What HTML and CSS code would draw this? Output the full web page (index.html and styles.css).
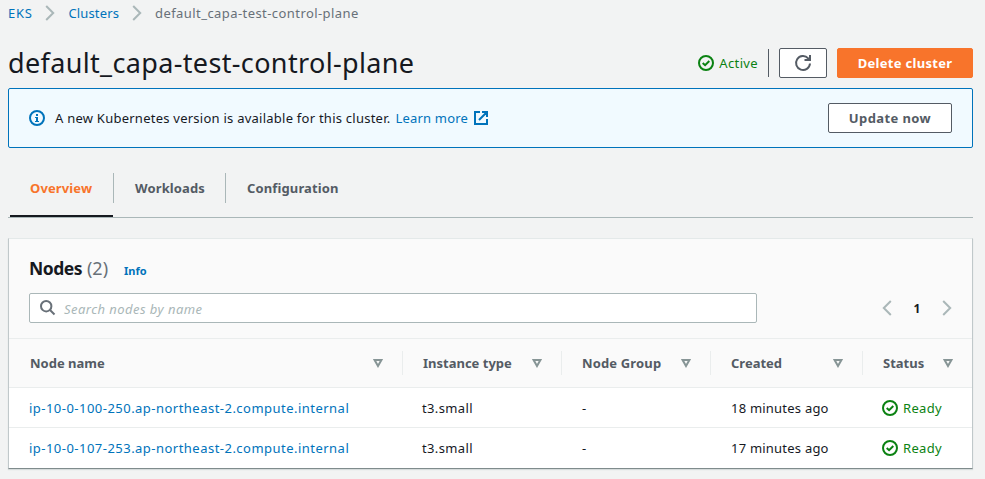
FILE: index.html
```html
<!DOCTYPE html>
<html lang="en">
<head>
<meta charset="utf-8">
<title>default_capa-test-control-plane</title>
<link rel="stylesheet" href="styles.css">
</head>
<body>
<svg class="defs" width="0" height="0" aria-hidden="true">
  <symbol id="check" viewBox="0 0 16 16"><circle cx="8" cy="8" r="7" fill="none" stroke="currentColor" stroke-width="2"/><path d="M4.7 8l2.4 2.2L11.3 6" fill="none" stroke="currentColor" stroke-width="2"/></symbol>
  <symbol id="next" viewBox="0 0 10 16"><path d="M1.2 1l7 7-7 7" fill="none" stroke="currentColor" stroke-width="2"/></symbol>
  <symbol id="prev" viewBox="0 0 10 16"><path d="M8.8 1l-7 7 7 7" fill="none" stroke="currentColor" stroke-width="2"/></symbol>
  <symbol id="sort" viewBox="0 0 10 9"><path d="M1.6 1h6.8L5 7z" fill="none" stroke="currentColor" stroke-width="2"/></symbol>
</svg>
<nav class="crumbs">
  <a class="eks">EKS</a><svg width="10" height="16"><use href="#next"/></svg>
  <a class="clusters">Clusters</a><svg width="10" height="16"><use href="#next"/></svg>
  <span class="current">default_capa-test-control-plane</span>
</nav>
<header class="title-bar">
  <h1>default_capa-test-control-plane</h1>
  <div class="actions">
    <span class="status"><svg width="16" height="16"><use href="#check"/></svg><span>Active</span></span>
    <i class="rule"></i>
    <button class="btn refresh" aria-label="Refresh"><svg width="18" height="18" viewBox="0 0 18 18"><path d="M16 9.5A7 7 0 1 1 14.2 4.3L15.7 6" fill="none" stroke="currentColor" stroke-width="2"/><path d="M10.5 6H16V1" fill="none" stroke="currentColor" stroke-width="2"/></svg></button>
    <button class="btn primary">Delete cluster</button>
  </div>
</header>
<section class="alert">
  <svg width="16" height="16" viewBox="0 0 16 16"><circle cx="8" cy="8" r="7" fill="none" stroke="currentColor" stroke-width="2"/><path d="M7 4h2v2H7zM6 7h3v4h1v1H6v-1h1V8H6z" fill="currentColor"/></svg>
  <span class="message">A new Kubernetes version is available for this cluster.</span>
  <a class="learn">Learn more</a>
  <svg class="external" width="14" height="14" viewBox="0 0 14 14"><path d="M6 1H1v12h12V8M8 1h5v5M13 1L5 9" fill="none" stroke="currentColor" stroke-width="2"/></svg>
  <button class="btn update">Update now</button>
</section>
<div class="tabs">
  <a class="tab active"><span>Overview</span></a>
  <a class="tab"><span>Workloads</span></a>
  <a class="tab"><span>Configuration</span></a>
</div>
<main class="panel">
  <div class="panel-head">
    <div class="heading"><h2>Nodes</h2><span class="count">(2)</span><a class="info">Info</a></div>
    <div class="tools">
      <label class="search"><svg width="16" height="16" viewBox="0 0 16 16"><circle cx="6.2" cy="6.2" r="5.2" fill="none" stroke="currentColor" stroke-width="2"/><path d="M10 10l4.5 4.5" stroke="currentColor" stroke-width="2"/></svg><span>Search nodes by name</span></label>
      <div class="pager"><svg width="10" height="16"><use href="#prev"/></svg><b>1</b><svg width="10" height="16"><use href="#next"/></svg></div>
    </div>
  </div>
  <div class="row head">
    <div><span>Node name</span><svg width="10" height="9"><use href="#sort"/></svg></div>
    <div><span>Instance type</span><svg width="10" height="9"><use href="#sort"/></svg></div>
    <div><span class="group">Node Group</span><svg width="10" height="9"><use href="#sort"/></svg></div>
    <div><span>Created</span><svg width="10" height="9"><use href="#sort"/></svg></div>
    <div><span>Status</span><svg width="10" height="9"><use href="#sort"/></svg></div>
  </div>
  <div class="row">
    <div><a class="node">ip-10-0-100-250.ap-northeast-2.compute.internal</a></div>
    <div class="type">t3.small</div><div>-</div><div class="age">18 minutes ago</div>
    <div class="status"><svg width="16" height="16"><use href="#check"/></svg><span>Ready</span></div>
  </div>
  <div class="row">
    <div><a class="node">ip-10-0-107-253.ap-northeast-2.compute.internal</a></div>
    <div class="type">t3.small</div><div>-</div><div class="age">17 minutes ago</div>
    <div class="status"><svg width="16" height="16"><use href="#check"/></svg><span>Ready</span></div>
  </div>
</main>
</body>
</html>
```
FILE: styles.css
```css
* { box-sizing: border-box; }
body { margin: 0; padding: 0 12px 0 8px; height: 479px; overflow: hidden; background: #f2f3f3; color: #16191f; font: 13px/20px "Noto Sans", sans-serif; white-space: nowrap; }
.defs { position: absolute; }
svg { display: block; flex: none; }
a { color: #0073bb; }
.crumbs { display: flex; align-items: center; height: 26px; color: #aab7b8; }
.crumbs svg { margin: 0 14px 0 12px; }
.crumbs .eks { letter-spacing: .7px; }
.crumbs .clusters { letter-spacing: .13px; }
.crumbs .clusters + svg { margin: 0 13px; }
.crumbs .current { color: #687078; letter-spacing: .43px; }
.title-bar { display: flex; align-items: center; justify-content: space-between; height: 62px; padding-top: 12px; }
h1 { margin: 0; font-size: 27px; line-height: 36px; font-weight: 400; letter-spacing: .35px; }
.actions { display: flex; align-items: center; }
.status { display: flex; align-items: center; gap: 5px; color: #0b8212; letter-spacing: .35px; }
.rule { width: 1px; height: 28px; margin: 0 10px; background: #545b64; }
.btn { display: flex; align-items: center; justify-content: center; height: 30px; padding: 0; border: 1px solid #545b64; border-radius: 2px; background: #fff; color: #545b64; font: 700 13px/20px "Noto Sans", sans-serif; letter-spacing: .3px; }
.refresh { width: 48px; margin-right: 10px; }
.primary { width: 136px; background: #f8742b; border-color: #f8742b; color: #fff; }
.alert { display: flex; align-items: center; height: 60px; padding: 0 20px; border: 1px solid #0073bb; border-radius: 2px; background: #f1faff; }
.alert > svg { color: #0073bb; }
.message { margin-left: 10px; letter-spacing: .245px; }
.learn { margin-left: 5px; letter-spacing: .2px; }
.external { margin-left: 6px; }
.update { width: 124px; margin-left: auto; letter-spacing: .4px; }
.tabs { display: flex; height: 70px; padding: 25px 0 0 2px; border-bottom: 1px solid #aab7b8; font-weight: 700; color: #545b64; letter-spacing: .13px; }
.tab { display: flex; align-items: center; height: 30px; padding: 0 20px; color: #545b64; border-right: 1px solid #aab7b8; }
.tab:nth-child(1) { width: 104px; }
.tab:nth-child(2) { width: 112px; padding-left: 21px; }
.tab:nth-child(3) { padding-left: 21px; border: 0; }
.tab.active { color: #f8742b; position: relative; }
.tab.active::after { content: ""; position: absolute; left: 0; right: 0; bottom: -14px; height: 2px; background: #16191f; }
.panel { margin-top: 20px; height: 231px; border: 1px solid #c0c8ca; border-top-color: #e4e9e9; border-bottom-color: #7f8b8c; background: #fff; box-shadow: 0 1px 1px #d5dbdb; }
.panel-head { height: 100px; padding: 17px 20px 0; border-bottom: 1px solid #eaeded; background: #fafafa; }
.heading { display: flex; align-items: baseline; height: 37px; line-height: 24px; }
h2 { margin: 0; font-size: 17.5px; line-height: 24px; letter-spacing: -.5px; }
.count { margin-left: 5px; font-size: 18px; color: #687078; }
.info { margin-left: 16px; font-size: 11px; font-weight: 700; }
.tools { display: flex; align-items: center; justify-content: space-between; }
.search { display: flex; align-items: center; width: 728px; height: 30px; padding-left: 10px; border: 1px solid #aab7b8; border-radius: 2px; background: #fff; color: #687078; }
.search span { margin: 2px 0 0 8px; color: #aab7b8; font-style: italic; letter-spacing: .45px; }
.pager { display: flex; align-items: center; width: 70px; justify-content: space-between; color: #aab7b8; }
.pager b { margin-top: 1px; color: #16191f; font-size: 12px; }
.row { display: grid; grid-template-columns: 394px 159px 149px 152px 109px; height: 40px; border-bottom: 1px solid #eaeded; }
.row:last-child { border-bottom: 0; }
.row > div { display: flex; align-items: center; padding-left: 20px; }
.row > .type { padding-left: 19px; letter-spacing: .37px; }
.row > .status { padding-left: 19px; }
.node { letter-spacing: .475px; }
.age { letter-spacing: .22px; }
.head { height: 49px; background: #fafafa; color: #545b64; font-weight: 700; align-items: center; }
.group { letter-spacing: .15px; }
.head > div { height: 24px; padding: 0 19px 0 20px; justify-content: space-between; border-right: 1px solid #eaeded; }
.head > div:first-child { padding-left: 21px; }
.head > div:last-child { border: 0; }
.head svg { color: #879596; }
```
